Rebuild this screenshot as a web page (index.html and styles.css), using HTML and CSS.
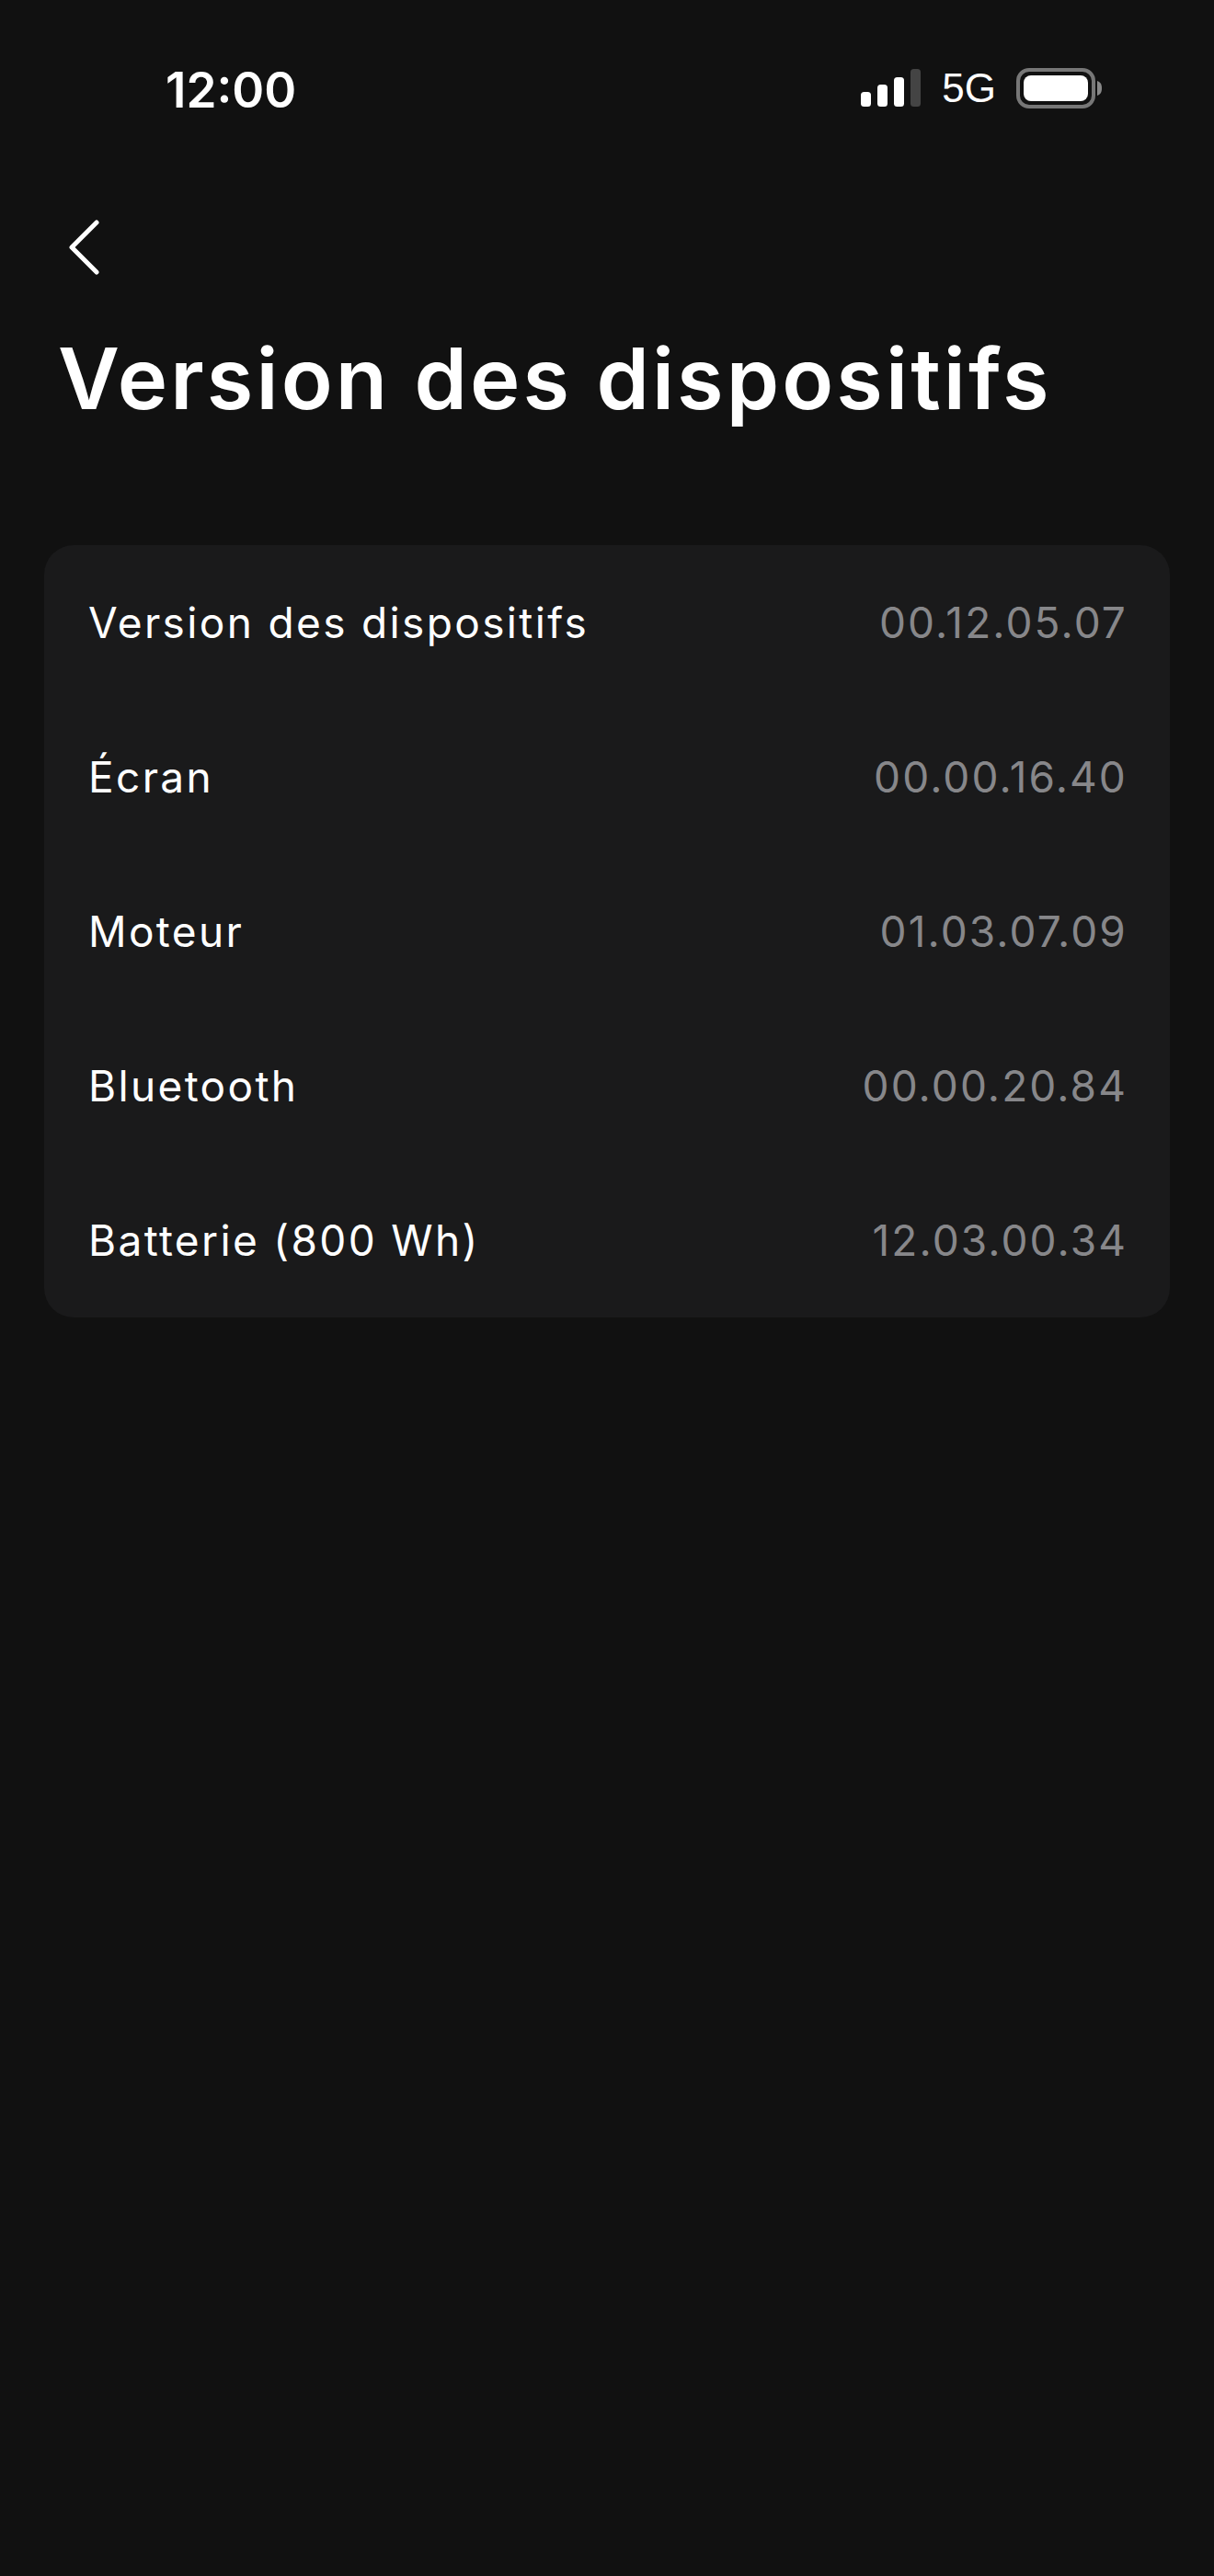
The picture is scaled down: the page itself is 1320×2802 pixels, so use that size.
FILE: index.html
```html
<!DOCTYPE html>
<html lang="fr">

<head>
  <meta charset="UTF-8">
  <meta name="viewport" content="width=device-width, initial-scale=1.0">
  <title>Version des dispositifs</title>
  <link rel="stylesheet" href="styles.css">
</head>

<body>
  <div class="screen">
    <div class="status-bar">
      <span class="clock">12:00</span>
      <div class="status-icons">
        <svg class="signal" width="66" height="42" viewBox="0 0 66 42">
          <rect x="0" y="25" width="11" height="16" rx="3.5" fill="#fff" />
          <rect x="18" y="17" width="11" height="24" rx="3.5" fill="#fff" />
          <rect x="36" y="9" width="11" height="32" rx="3.5" fill="#fff" />
          <rect x="54" y="0" width="11" height="41" rx="3.5" fill="#444" />
        </svg>
        <span class="network">5G</span>
        <svg class="battery" width="94" height="44" viewBox="0 0 94 44">
          <rect x="2" y="2" width="82" height="40" rx="12" fill="none" stroke="#777" stroke-width="4" />
          <rect x="8" y="8" width="70" height="28" rx="8" fill="#fff" />
          <path d="M88 14c3 1 5 3 5 8s-2 7-5 8z" fill="#888" />
        </svg>
      </div>
    </div>

    <div class="header">
      <button class="back-button" aria-label="Retour">
        <svg width="36" height="60" viewBox="0 0 36 60">
          <path d="M32 3L5 30l27 27" fill="none" stroke="#fff" stroke-width="5" stroke-linecap="round" stroke-linejoin="round" />
        </svg>
      </button>
      <h1>Version des dispositifs</h1>
    </div>

    <div class="card">
      <div class="row"><span class="row-label">Version des dispositifs</span><span class="row-value">00.12.05.07</span></div>
      <div class="row"><span class="row-label">Écran</span><span class="row-value">00.00.16.40</span></div>
      <div class="row"><span class="row-label">Moteur</span><span class="row-value">01.03.07.09</span></div>
      <div class="row"><span class="row-label">Bluetooth</span><span class="row-value">00.00.20.84</span></div>
      <div class="row"><span class="row-label">Batterie (800 Wh)</span><span class="row-value">12.03.00.34</span></div>
    </div>
  </div>
</body>

</html>
```

FILE: styles.css
```css
body {
  margin: 0;
  background-color: #111;
  color: #fff;
  font-family: Inter, 'Liberation Sans', sans-serif;
}

.screen {
  width: 1320px;
  height: 2802px;
  overflow: hidden;
}

.status-bar {
  display: flex;
  justify-content: space-between;
  align-items: center;
  height: 44px;
  padding: 74px 121px 0 180px;
}

.clock {
  margin-top: 4px;
  font-size: 53px;
  font-weight: 600;
  line-height: 44px;
}

.status-icons {
  display: flex;
  align-items: center;
  gap: 22px;
}

.network {
  font-family: 'Liberation Sans', sans-serif;
  font-size: 44px;
  line-height: 44px;
}

.header {
  padding: 121px 63px 0;
}

.back-button {
  display: block;
  padding: 0;
  margin-left: 10px;
  height: 60px;
  border: none;
  background: none;
}

.back-button svg {
  display: block;
}

h1 {
  margin: 57px 0 0;
  font-size: 92px;
  font-weight: 600;
  line-height: 112px;
  letter-spacing: 3.1px;
}

.card {
  margin: 125px 48px 0;
  background-color: #1a1a1b;
  border-radius: 32px;
}

.row {
  display: flex;
  justify-content: space-between;
  align-items: center;
  height: 168px;
  padding: 0 46px 0 48px;
  font-size: 46px;
}

.row-label {
  letter-spacing: 2.35px;
}

.row-value {
  color: #87878a;
  letter-spacing: 2.1px;
}
```
